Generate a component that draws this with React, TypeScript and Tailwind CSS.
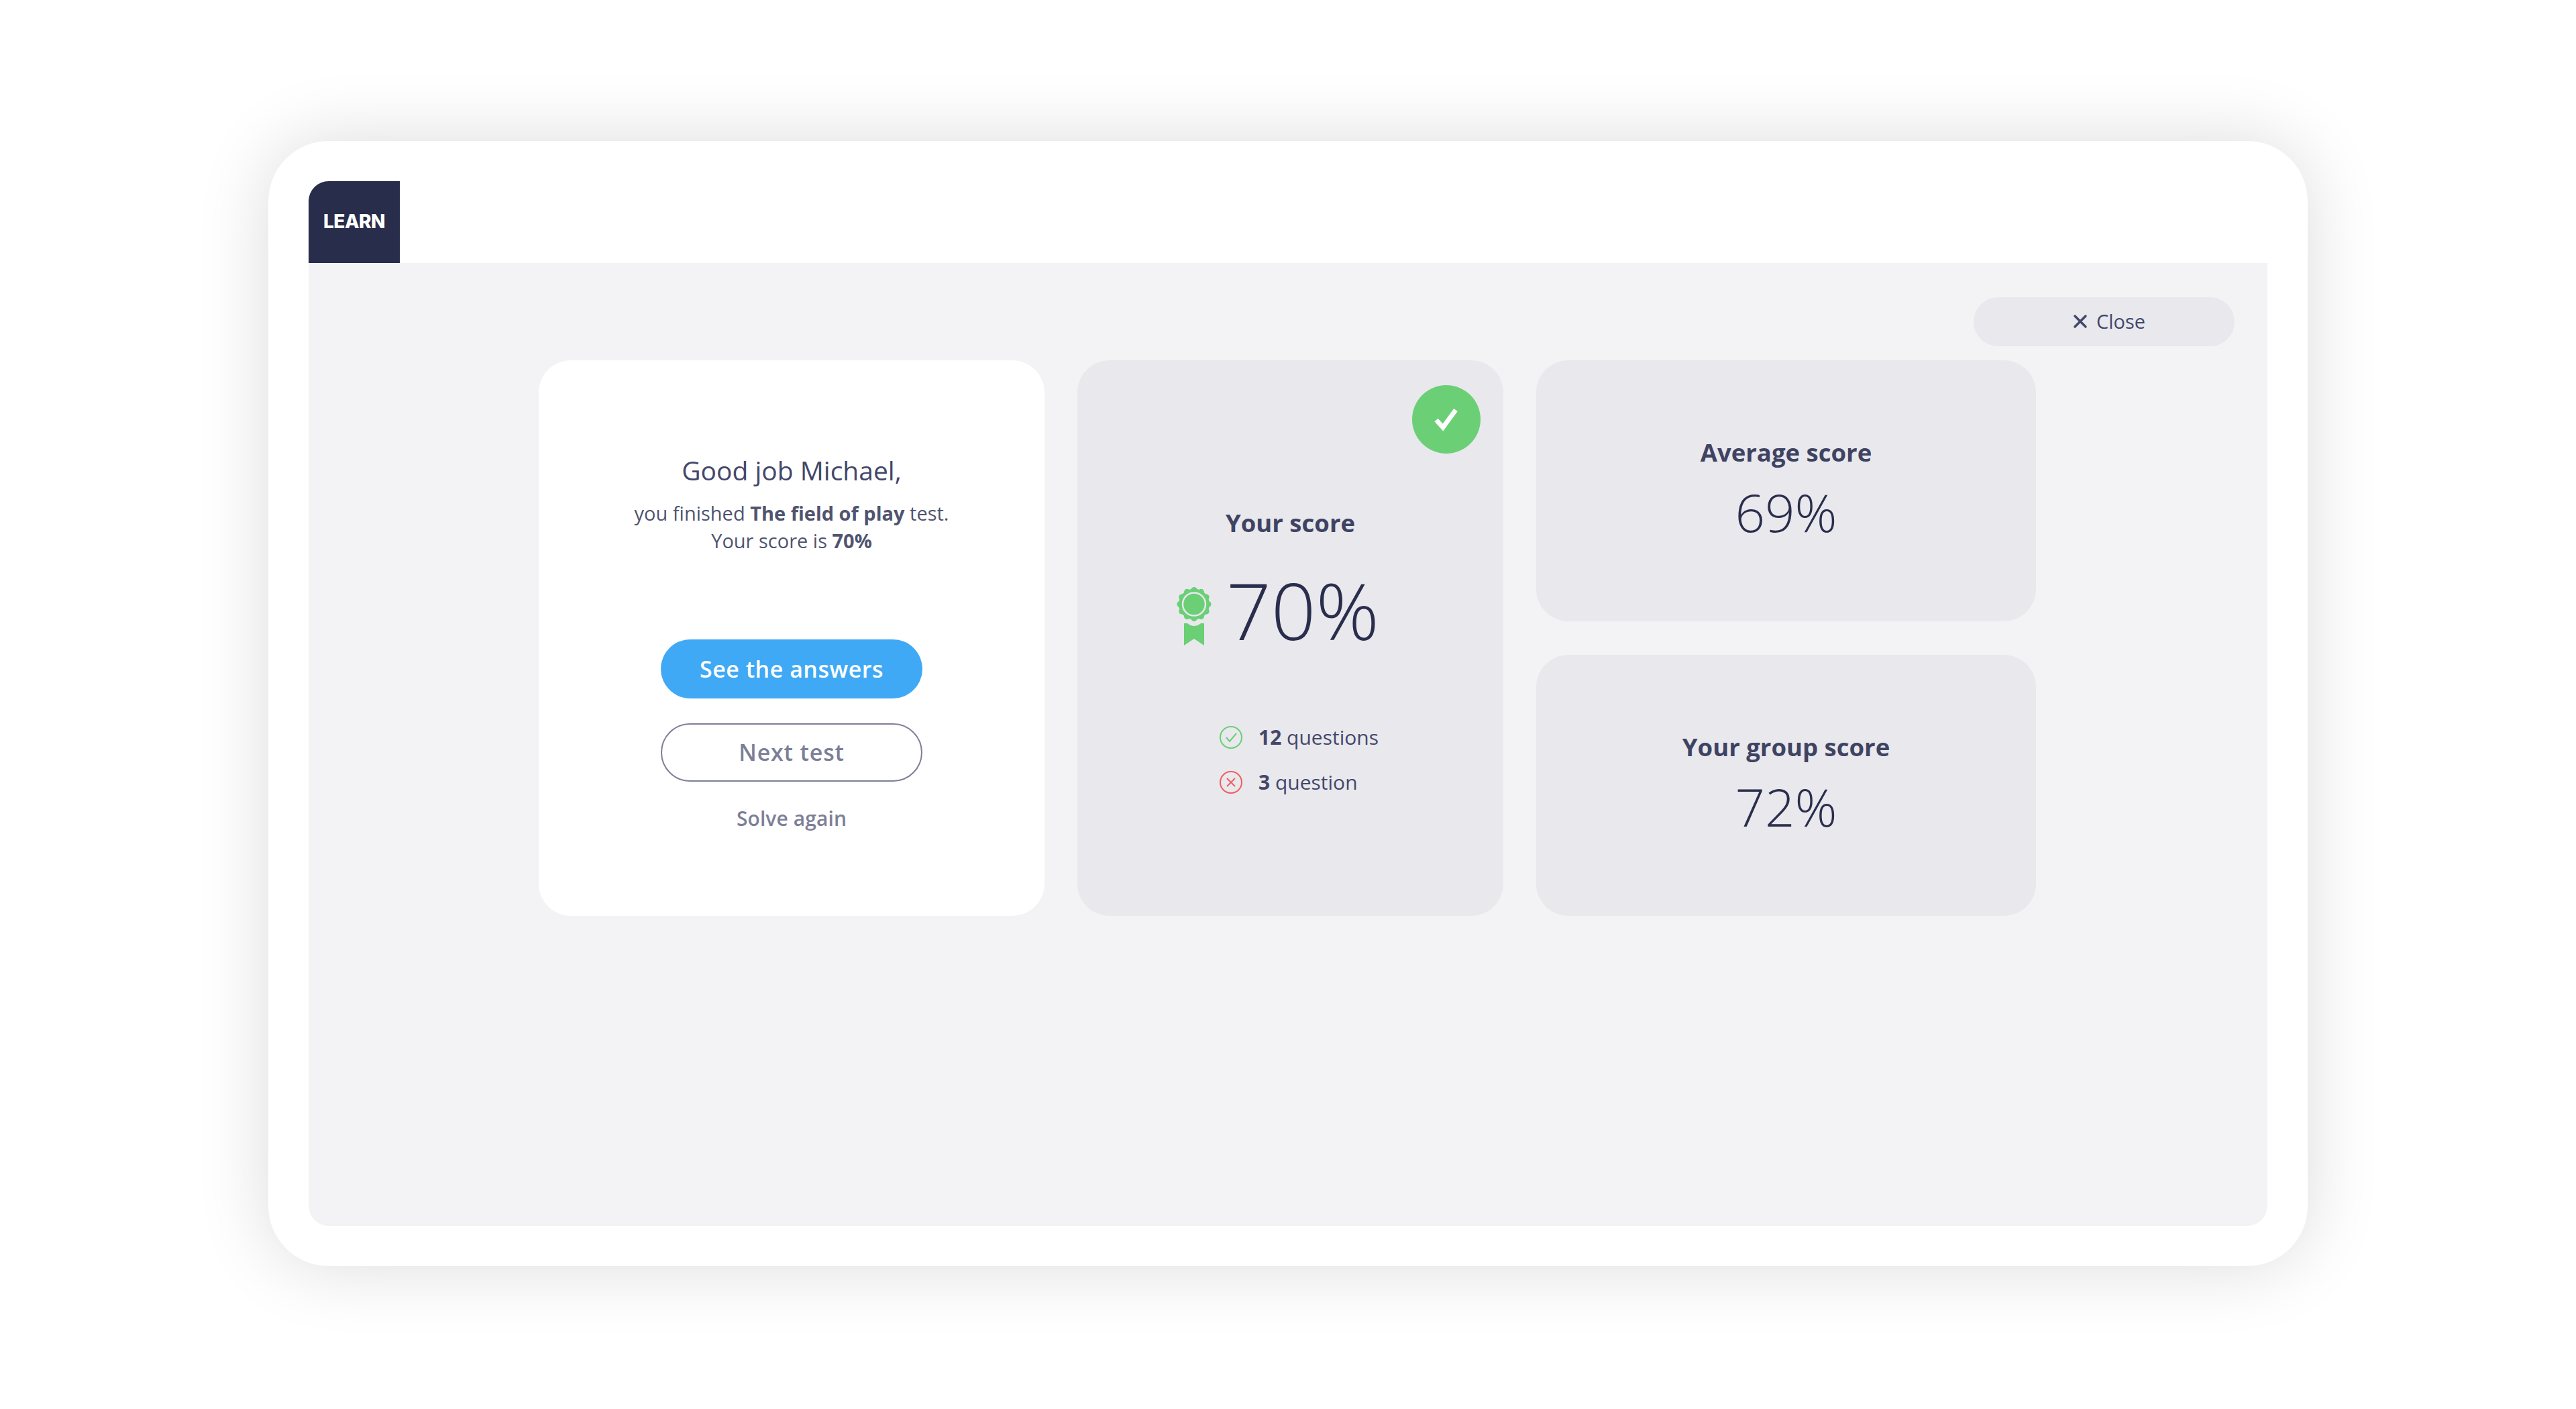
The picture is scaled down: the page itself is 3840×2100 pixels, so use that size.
import { X } from 'lucide-react';

const scallops = Array.from({ length: 12 }, (_, i) => {
  const a = (i / 12) * Math.PI * 2;
  return { cx: 26 + Math.sin(a) * 21, cy: 25.5 - Math.cos(a) * 21 };
});

function Medal() {
  return (
    <svg width="52" height="87" viewBox="0 0 52 87" className="shrink-0 mt-[18px]">
      <g fill="#6bcf76">
        <circle cx="26" cy="25.5" r="23" />
        {scallops.map((s, i) => (
          <circle key={i} cx={s.cx} cy={s.cy} r="4.5" />
        ))}
        <circle cx="26" cy="25.5" r="17" stroke="#e8e8ed" strokeWidth="2.5" />
        <path d="M11 54 L16 54 Q26 62 36 54 L41 54 V87 L26 77 L11 87 Z" />
      </g>
    </svg>
  );
}

function ScoreCard({ title, value }: { title: string; value: string }) {
  return (
    <div className="h-[389px] rounded-[48px] bg-[#e8e8ed] pt-[113px] flex flex-col items-center">
      <div className="text-[36.5px] leading-[48px] font-bold text-[#3f4362]">{title}</div>
      <div className="mt-[15px] text-[78px] leading-[100px] font-light text-[#2a2e4c]">{value}</div>
    </div>
  );
}

export default function App() {
  return (
    <div className="w-[3840px] h-[2100px] bg-white pt-[210px] pl-[400px] font-['Open_Sans',sans-serif]">
      <div className="w-[3040px] h-[1677px] rounded-[90px] bg-white p-[60px] flex flex-col shadow-[0_0_110px_rgba(0,0,0,0.14)]">
        <div className="h-[122px] w-[136px] rounded-tl-[30px] bg-[#282d4b] flex items-center justify-center pb-[2px]">
          <span className="text-[28px] leading-[36px] font-extrabold text-white font-['Inter',sans-serif] tracking-[-0.5px]">LEARN</span>
        </div>

        <div className="flex-1 rounded-b-[30px] bg-[#f3f3f6] pt-[51px] pl-[343px] pr-[49px]">
          <div className="flex justify-end">
            <button className="w-[389px] h-[73px] rounded-full bg-[#e8e8ed] flex items-center justify-center gap-[8px] pl-[10px] pb-[2px] text-[29px] text-[#43476a]">
              <X className="w-[32px] h-[32px]" strokeWidth={2.6} />
              Close
            </button>
          </div>

          <div className="mt-[21px] flex gap-[49px]">
            <div className="w-[754px] h-[828px] rounded-[48px] bg-white pt-[137px] flex flex-col items-center">
              <div className="text-[39px] leading-[54px] text-[#43476a]">Good job Michael,</div>
              <p className="mt-[16px] text-[29px] leading-[41px] text-center text-[#50546f]">
                you finished <b className="font-bold">The field of play</b> test.
                <br />
                Your score is <b className="font-bold">70%</b>
              </p>
              <button className="mt-[127px] w-[390px] h-[88px] rounded-full bg-[#3fa9f5] text-[34px] font-semibold tracking-[0.5px] text-white">
                See the answers
              </button>
              <button className="mt-[37px] w-[390px] h-[87px] rounded-full border-2 border-[#7d7f98] bg-white text-[34px] font-semibold tracking-[0.8px] text-[#7d7f98]">
                Next test
              </button>
              <div className="mt-[35px] text-[30px] leading-[40px] font-semibold tracking-[0.1px] text-[#7d7f98]">Solve again</div>
            </div>

            <div className="relative w-[635px] h-[828px] rounded-[48px] bg-[#e8e8ed] pt-[218px]">
              <div className="absolute top-[37px] right-[34px] w-[102px] h-[102px] rounded-full bg-[#6bcf76]">
                <svg width="102" height="102" viewBox="0 0 102 102" fill="none">
                  <path d="M36 52 L46 63 L65 37" stroke="#fff" strokeWidth="7" />
                </svg>
              </div>
              <div className="text-center text-[36.5px] leading-[48px] font-bold text-[#3f4362]">Your score</div>
              <div className="mt-[31px] flex items-center justify-center gap-[22px] pr-[37px]">
                <Medal />
                <div className="text-[117px] leading-[150px] font-light text-[#2a2e4c]">70%</div>
              </div>
              <div className="mt-[95px] pl-[212px] flex flex-col gap-[27px] text-[30px] leading-[40px] text-[#43476a]">
                <div className="flex items-center gap-[24px]">
                  <svg width="34" height="34" viewBox="0 0 34 34" fill="none" stroke="#6bcf76" strokeWidth="2">
                    <circle cx="17" cy="17" r="16" />
                    <path d="M10 17 L15 23 L25 11" />
                  </svg>
                  <span><b className="font-bold">12</b> questions</span>
                </div>
                <div className="flex items-center gap-[24px]">
                  <svg width="34" height="34" viewBox="0 0 34 34" fill="none" stroke="#f0605f" strokeWidth="2">
                    <circle cx="17" cy="17" r="16" />
                    <path d="M11 11 L23 23 M23 11 L11 23" />
                  </svg>
                  <span><b className="font-bold">3</b> question</span>
                </div>
              </div>
            </div>

            <div className="w-[745px] flex flex-col gap-[50px]">
              <ScoreCard title="Average score" value="69%" />
              <ScoreCard title="Your group score" value="72%" />
            </div>
          </div>
        </div>
      </div>
    </div>
  );
}
